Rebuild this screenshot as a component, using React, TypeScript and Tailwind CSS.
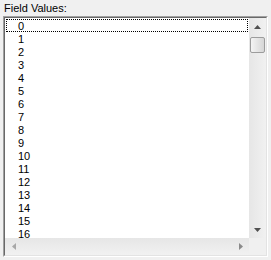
import React from "react";

const rows = Array.from({ length: 17 }, (_, i) => i);

function Tri({ dir, color }: { dir: "up" | "down" | "left" | "right"; color: string }) {
  if (dir === "up" || dir === "down") {
    const pts = dir === "up" ? "3.5,0 7,4 0,4" : "0,0 7,0 3.5,4";
    return (
      <svg width="7" height="4" viewBox="0 0 7 4" className="block">
        <polygon points={pts} fill={color} />
      </svg>
    );
  }
  const pts = dir === "left" ? "4,0 4,7 0,3.5" : "0,0 4,3.5 0,7";
  return (
    <svg width="4" height="7" viewBox="0 0 4 7" className="block">
      <polygon points={pts} fill={color} />
    </svg>
  );
}

export default function App() {
  return (
    <div
      className="w-[271px] h-[260px] bg-[#f0f0f0] text-black overflow-hidden"
      style={{ fontFamily: '"Liberation Sans", Arial, sans-serif' }}
    >
      <div className="h-[16px] pl-[4px] pt-[2px] text-[11px] leading-[12px]">Field Values:</div>
      <div className="ml-[3px] w-[265px] h-[241px] border border-t-[#a0a0a0] border-l-[#a0a0a0] border-r-white border-b-white">
        <div className="w-full h-full border border-t-[#696969] border-l-[#696969] border-r-[#e3e3e3] border-b-[#e3e3e3] flex flex-col">
          <div className="flex flex-1 min-h-0">
            <div className="flex-1 bg-white overflow-hidden pt-[1px] pl-[1px] pr-[1px]">
              {rows.map((r) => (
                <div
                  key={r}
                  className={
                    "h-[13px] pl-[11px] text-[11px] leading-[12px] " +
                    (r === 0 ? "border border-dotted border-black" : "border border-transparent")
                  }
                >
                  {r}
                </div>
              ))}
            </div>
            <div className="w-[17px] flex flex-col bg-gradient-to-r from-[#e6e6e6] to-[#f1f1f1]">
              <div className="h-[17px] flex items-center justify-center">
                <Tri dir="up" color="#505050" />
              </div>
              <div className="mt-[2px] ml-[1px] w-[15px] h-[16px] rounded-[2px] border border-[#9c9c9c] bg-gradient-to-r from-[#f4f4f4] to-[#d6d6d6]" />
              <div className="flex-1" />
              <div className="h-[17px] flex items-center justify-center">
                <Tri dir="down" color="#505050" />
              </div>
            </div>
          </div>
          <div className="flex h-[17px]">
            <div className="flex-1 flex bg-gradient-to-b from-[#e6e6e6] to-[#f1f1f1]">
              <div className="w-[17px] flex items-center justify-center">
                <Tri dir="left" color="#a8a8a8" />
              </div>
              <div className="flex-1" />
              <div className="w-[17px] flex items-center justify-center">
                <Tri dir="right" color="#8a8a8a" />
              </div>
            </div>
            <div className="w-[17px] bg-[#f0f0f0]" />
          </div>
        </div>
      </div>
    </div>
  );
}
